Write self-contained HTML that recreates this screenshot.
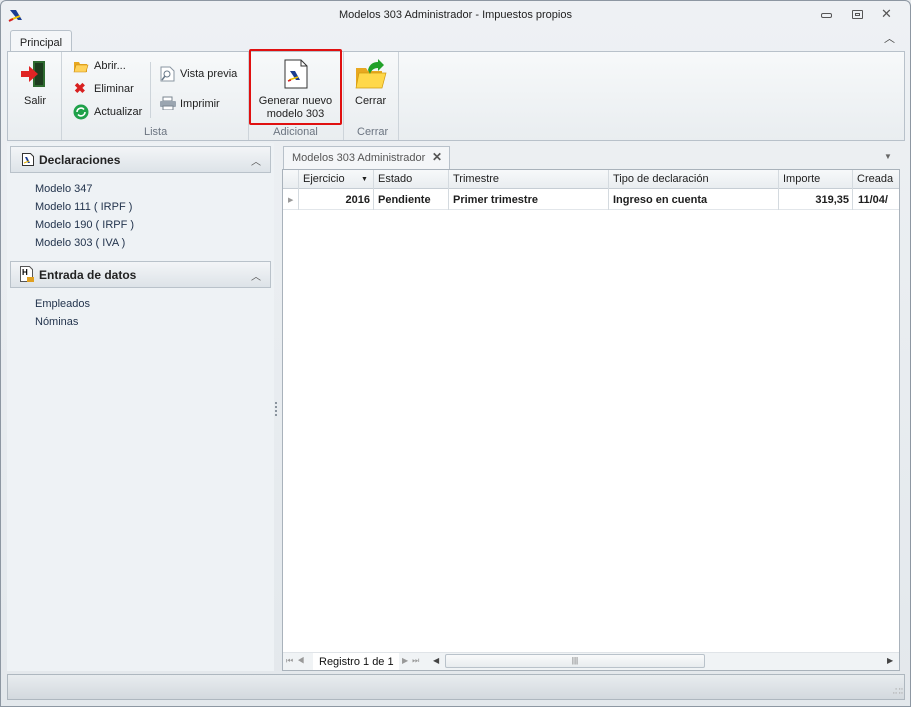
<!DOCTYPE html>
<html><head><meta charset="utf-8"><style>
*{box-sizing:border-box;margin:0;padding:0}
body{width:911px;height:707px;overflow:hidden;font-family:"Liberation Sans",sans-serif;font-size:11px;color:#1e1e1e;background:#e6eaee;position:relative}
.a{position:absolute;white-space:nowrap}
.win{left:0;top:0;width:911px;height:707px;border:1px solid #8d97a2;border-radius:6px 6px 0 0;background:linear-gradient(#eef1f4,#e3e8ec)}
.t{font-size:11px}
.gl{color:#6b7480;font-size:11px}
.side a{display:block;color:#23344d;text-decoration:none}
</style></head><body>
<div class="a win"></div>
<svg class="a" style="left:8px;top:7px" width="16" height="16"><path d="M2 3 L8 3 L14 13 L10 13Z" fill="#1b3d8f"/><path d="M2 13 L12 9" stroke="#f0c400" stroke-width="2"/><path d="M1 14 L5 12" stroke="#d52020" stroke-width="2"/></svg>
<div class="a t" style="left:0;width:911px;top:9px;text-align:center;color:#222">Modelos 303 Administrador - Impuestos propios</div>
<div class="a" style="left:821px;top:13px;width:11px;height:5px;border:1px solid #555;border-radius:2px"></div>
<div class="a" style="left:852px;top:10px;width:11px;height:9px;border:1px solid #555;border-radius:1px"><div style="margin:2px;height:3px;border:1px solid #555"></div></div>
<div class="a" style="left:881px;top:6px;font-size:13px;color:#555">✕</div>
<div class="a" style="left:884px;top:30px;font-size:11px;color:#444">︿</div>
<div class="a" style="left:10px;top:30px;width:62px;height:22px;background:#f4f6f8;border:1px solid #b8c1ca;border-bottom:none;border-radius:3px 3px 0 0;text-align:center;padding-top:6px;font-size:11px">Principal</div>
<div class="a" style="left:7px;top:51px;width:898px;height:90px;background:linear-gradient(#f7f9fa,#e9edf0);border:1px solid #b8c1ca"></div>
<div class="a" style="left:61px;top:52px;width:1px;height:88px;background:#cdd4da"></div>
<div class="a" style="left:248px;top:52px;width:1px;height:88px;background:#cdd4da"></div>
<div class="a" style="left:343px;top:52px;width:1px;height:88px;background:#cdd4da"></div>
<div class="a" style="left:398px;top:52px;width:1px;height:88px;background:#cdd4da"></div>
<div class="a" style="left:150px;top:62px;width:1px;height:56px;background:#cdd4da"></div>
<svg class="a" style="left:19px;top:59px" width="30" height="30"><rect x="14" y="2" width="12" height="26" fill="#2e6b30"/><rect x="16" y="4" width="8" height="22" fill="#1e3d1f"/><path d="M2 12 h8 v-5 l9 8 l-9 8 v-5 h-8z" fill="#e02424"/></svg>
<div class="a t" style="left:24px;top:95px">Salir</div>
<svg class="a" style="left:73px;top:59px" width="16" height="14"><path d="M1 3 h5 l1 2 h7 v8 h-13z" fill="#e8a820"/><path d="M3 6 h12 l-2 7 h-12z" fill="#ffd25a" stroke="#c98a10" stroke-width=".6"/></svg>
<div class="a t" style="left:94px;top:60px">Abrir...</div>
<div class="a" style="left:74px;top:81px;color:#d82020;font-size:14px;font-weight:bold;line-height:14px">✖</div>
<div class="a t" style="left:94px;top:83px">Eliminar</div>
<svg class="a" style="left:73px;top:104px" width="16" height="16"><circle cx="8" cy="8" r="7.5" fill="#1fa14a"/><path d="M4 8 a4 4 0 0 1 7 -2.5 M12 8 a4 4 0 0 1 -7 2.5" stroke="#fff" stroke-width="1.6" fill="none"/></svg>
<div class="a t" style="left:94px;top:106px">Actualizar</div>
<svg class="a" style="left:160px;top:66px" width="15" height="16"><path d="M1 1 h9 l4 4 v10 h-13z" fill="#fff" stroke="#8a96a2"/><circle cx="7" cy="8" r="3" fill="none" stroke="#6a7a8a"/><path d="M5 10 l-3 4" stroke="#6a7a8a" stroke-width="1.5"/></svg>
<div class="a t" style="left:180px;top:68px">Vista previa</div>
<svg class="a" style="left:159px;top:96px" width="18" height="14"><path d="M4 1 h9 v4 h-9z" fill="#fff" stroke="#7a8590"/><rect x="1" y="5" width="16" height="6" rx="1" fill="#9aa5b0"/><rect x="4" y="10" width="10" height="4" fill="#fff" stroke="#7a8590"/></svg>
<div class="a t" style="left:180px;top:98px">Imprimir</div>
<div class="a gl" style="left:144px;top:126px">Lista</div>
<div class="a" style="left:249px;top:49px;width:93px;height:76px;border:2px solid #e01010;border-radius:2px"></div>
<svg class="a" style="left:283px;top:59px" width="26" height="30"><path d="M2 1 h16 l6 6 v22 h-22z" fill="#fff" stroke="#333"/><path d="M18 1 v6 h6" fill="none" stroke="#333"/><path d="M7 12 h5 l5 9 h-4z" fill="#1b3d8f"/><path d="M6 21 l9 -3" stroke="#f0c400" stroke-width="1.5"/><path d="M5 22 l3 -1" stroke="#d52020" stroke-width="1.5"/></svg>
<div class="a t" style="left:251px;top:95px;width:89px;text-align:center;line-height:13px">Generar nuevo<br>modelo 303</div>
<div class="a gl" style="left:249px;top:126px;width:93px;text-align:center">Adicional</div>
<svg class="a" style="left:354px;top:58px" width="34" height="32"><path d="M2 10 h10 l2 3 h14 v17 h-26z" fill="#e8a820"/><path d="M5 15 h27 l-4 15 h-26z" fill="#ffd84a" stroke="#d09a10" stroke-width=".7"/><path d="M14 12 q2 -8 10 -8 v-3 l6 6 l-6 6 v-3 q-6 0 -8 6z" fill="#22a12a"/></svg>
<div class="a t" style="left:355px;top:95px">Cerrar</div>
<div class="a gl" style="left:357px;top:126px">Cerrar</div>
<div class="a" style="left:7px;top:143px;width:267px;height:528px;background:#eef2f5"></div>
<div class="a" style="left:10px;top:146px;width:261px;height:27px;background:linear-gradient(#f3f5f7,#dde3e8);border:1px solid #b9c2ca"></div>
<svg class="a" style="left:22px;top:153px" width="12" height="13"><path d="M.5 .5 h8 l3 3 v9 h-11z" fill="#fff" stroke="#333"/><path d="M3 4 h2 l3 6 h-2z" fill="#1b3d8f"/><path d="M2 10 l5 -2" stroke="#e0b000"/></svg>
<div class="a" style="left:39px;top:153px;font-size:12px;font-weight:bold;color:#222">Declaraciones</div>
<div class="a" style="left:251px;top:153px;font-size:10px;color:#555">︿</div>
<div class="a side t" style="left:35px;top:180px;line-height:18px"><a>Modelo 347</a><a>Modelo 111 ( IRPF )</a><a>Modelo 190 ( IRPF )</a><a>Modelo 303 ( IVA )</a></div>
<div class="a" style="left:10px;top:261px;width:261px;height:27px;background:linear-gradient(#f3f5f7,#dde3e8);border:1px solid #b9c2ca"></div>
<svg class="a" style="left:20px;top:266px" width="15" height="17"><path d="M.5 .5 h9 l3 3 v12 h-12z" fill="#fff" stroke="#555"/><text x="2" y="9" font-size="8" font-weight="bold" font-family="Liberation Sans">H</text><rect x="7" y="11" width="7" height="5" fill="#e0a020"/></svg>
<div class="a" style="left:39px;top:268px;font-size:12px;font-weight:bold;color:#222">Entrada de datos</div>
<div class="a" style="left:251px;top:268px;font-size:10px;color:#555">︿</div>
<div class="a side t" style="left:35px;top:295px;line-height:18px"><a>Empleados</a><a>Nóminas</a></div>
<div class="a" style="left:275px;top:402px;width:2px;height:14px;border-left:2px dotted #8a949e"></div>
<div class="a" style="left:283px;top:146px;width:167px;height:24px;background:#f4f6f8;border:1px solid #b8c1ca;border-bottom:none"></div>
<div class="a" style="left:292px;top:152px;color:#555;font-size:11px">Modelos 303 Administrador</div>
<div class="a" style="left:432px;top:150px;font-size:12px;font-weight:bold;color:#555">✕</div>
<div class="a" style="left:884px;top:152px;font-size:8px;color:#666">▼</div>
<div class="a" style="left:282px;top:169px;width:618px;height:502px;background:#fff;border:1px solid #a9b2bb"></div>
<div class="a" style="left:283px;top:170px;width:616px;height:19px;background:linear-gradient(#f7f9fa,#e9edf0);border-bottom:1px solid #c6cdd4"></div>
<div class="a" style="left:283px;top:189px;width:616px;height:21px;border-bottom:1px solid #e2e6ea"></div>
<div class="a" style="left:288px;top:196px;font-size:7px;color:#999">▶</div>
<div class="a" style="left:298px;top:170px;width:1px;height:40px;background:#d4dadf"></div>
<div class="a" style="left:373px;top:170px;width:1px;height:40px;background:#d4dadf"></div>
<div class="a" style="left:448px;top:170px;width:1px;height:40px;background:#d4dadf"></div>
<div class="a" style="left:608px;top:170px;width:1px;height:40px;background:#d4dadf"></div>
<div class="a" style="left:778px;top:170px;width:1px;height:40px;background:#d4dadf"></div>
<div class="a" style="left:852px;top:170px;width:1px;height:40px;background:#d4dadf"></div>
<div class="a t" style="left:303px;top:173px">Ejercicio</div>
<div class="a" style="left:361px;top:176px;font-size:7px">▼</div>
<div class="a t" style="left:378px;top:173px">Estado</div>
<div class="a t" style="left:453px;top:173px">Trimestre</div>
<div class="a t" style="left:613px;top:173px">Tipo de declaración</div>
<div class="a t" style="left:783px;top:173px">Importe</div>
<div class="a t" style="left:857px;top:173px">Creada</div>
<div class="a t" style="left:300px;width:70px;text-align:right;top:194px;font-weight:bold">2016</div>
<div class="a t" style="left:378px;top:194px;font-weight:bold">Pendiente</div>
<div class="a t" style="left:453px;top:194px;font-weight:bold">Primer trimestre</div>
<div class="a t" style="left:613px;top:194px;font-weight:bold">Ingreso en cuenta</div>
<div class="a t" style="left:780px;width:69px;text-align:right;top:194px;font-weight:bold">319,35</div>
<div class="a t" style="left:858px;top:194px;font-weight:bold;width:40px;overflow:hidden">11/04/</div>
<div class="a" style="left:283px;top:652px;width:616px;height:18px;background:#f0f3f5;border-top:1px solid #e0e4e8"></div>
<div class="a" style="left:286px;top:656px;font-size:8px;color:#999;letter-spacing:4px">⏮◀</div>
<div class="a t" style="left:313px;top:653px;width:86px;height:17px;background:#fff;padding:3px 0 0 6px;color:#111">Registro 1 de 1</div>
<div class="a" style="left:402px;top:656px;font-size:8px;color:#999;letter-spacing:4px">▶⏭</div>
<div class="a" style="left:433px;top:656px;font-size:8px;color:#444">◀</div>
<div class="a" style="left:445px;top:654px;width:260px;height:14px;background:linear-gradient(#f9fafb,#e8ecef);border:1px solid #b9c2ca;border-radius:2px;text-align:center;font-size:8px;color:#666;line-height:12px">|||</div>
<div class="a" style="left:887px;top:656px;font-size:8px;color:#444">▶</div>
<div class="a" style="left:7px;top:674px;width:898px;height:26px;background:linear-gradient(#e8ecef,#d3d9de);border:1px solid #aeb7bf"></div>
<div class="a" style="left:892px;top:686px;font-size:8px;color:#aaa;line-height:4px">⠠⠤<br>⠤⠤</div>
</body></html>
